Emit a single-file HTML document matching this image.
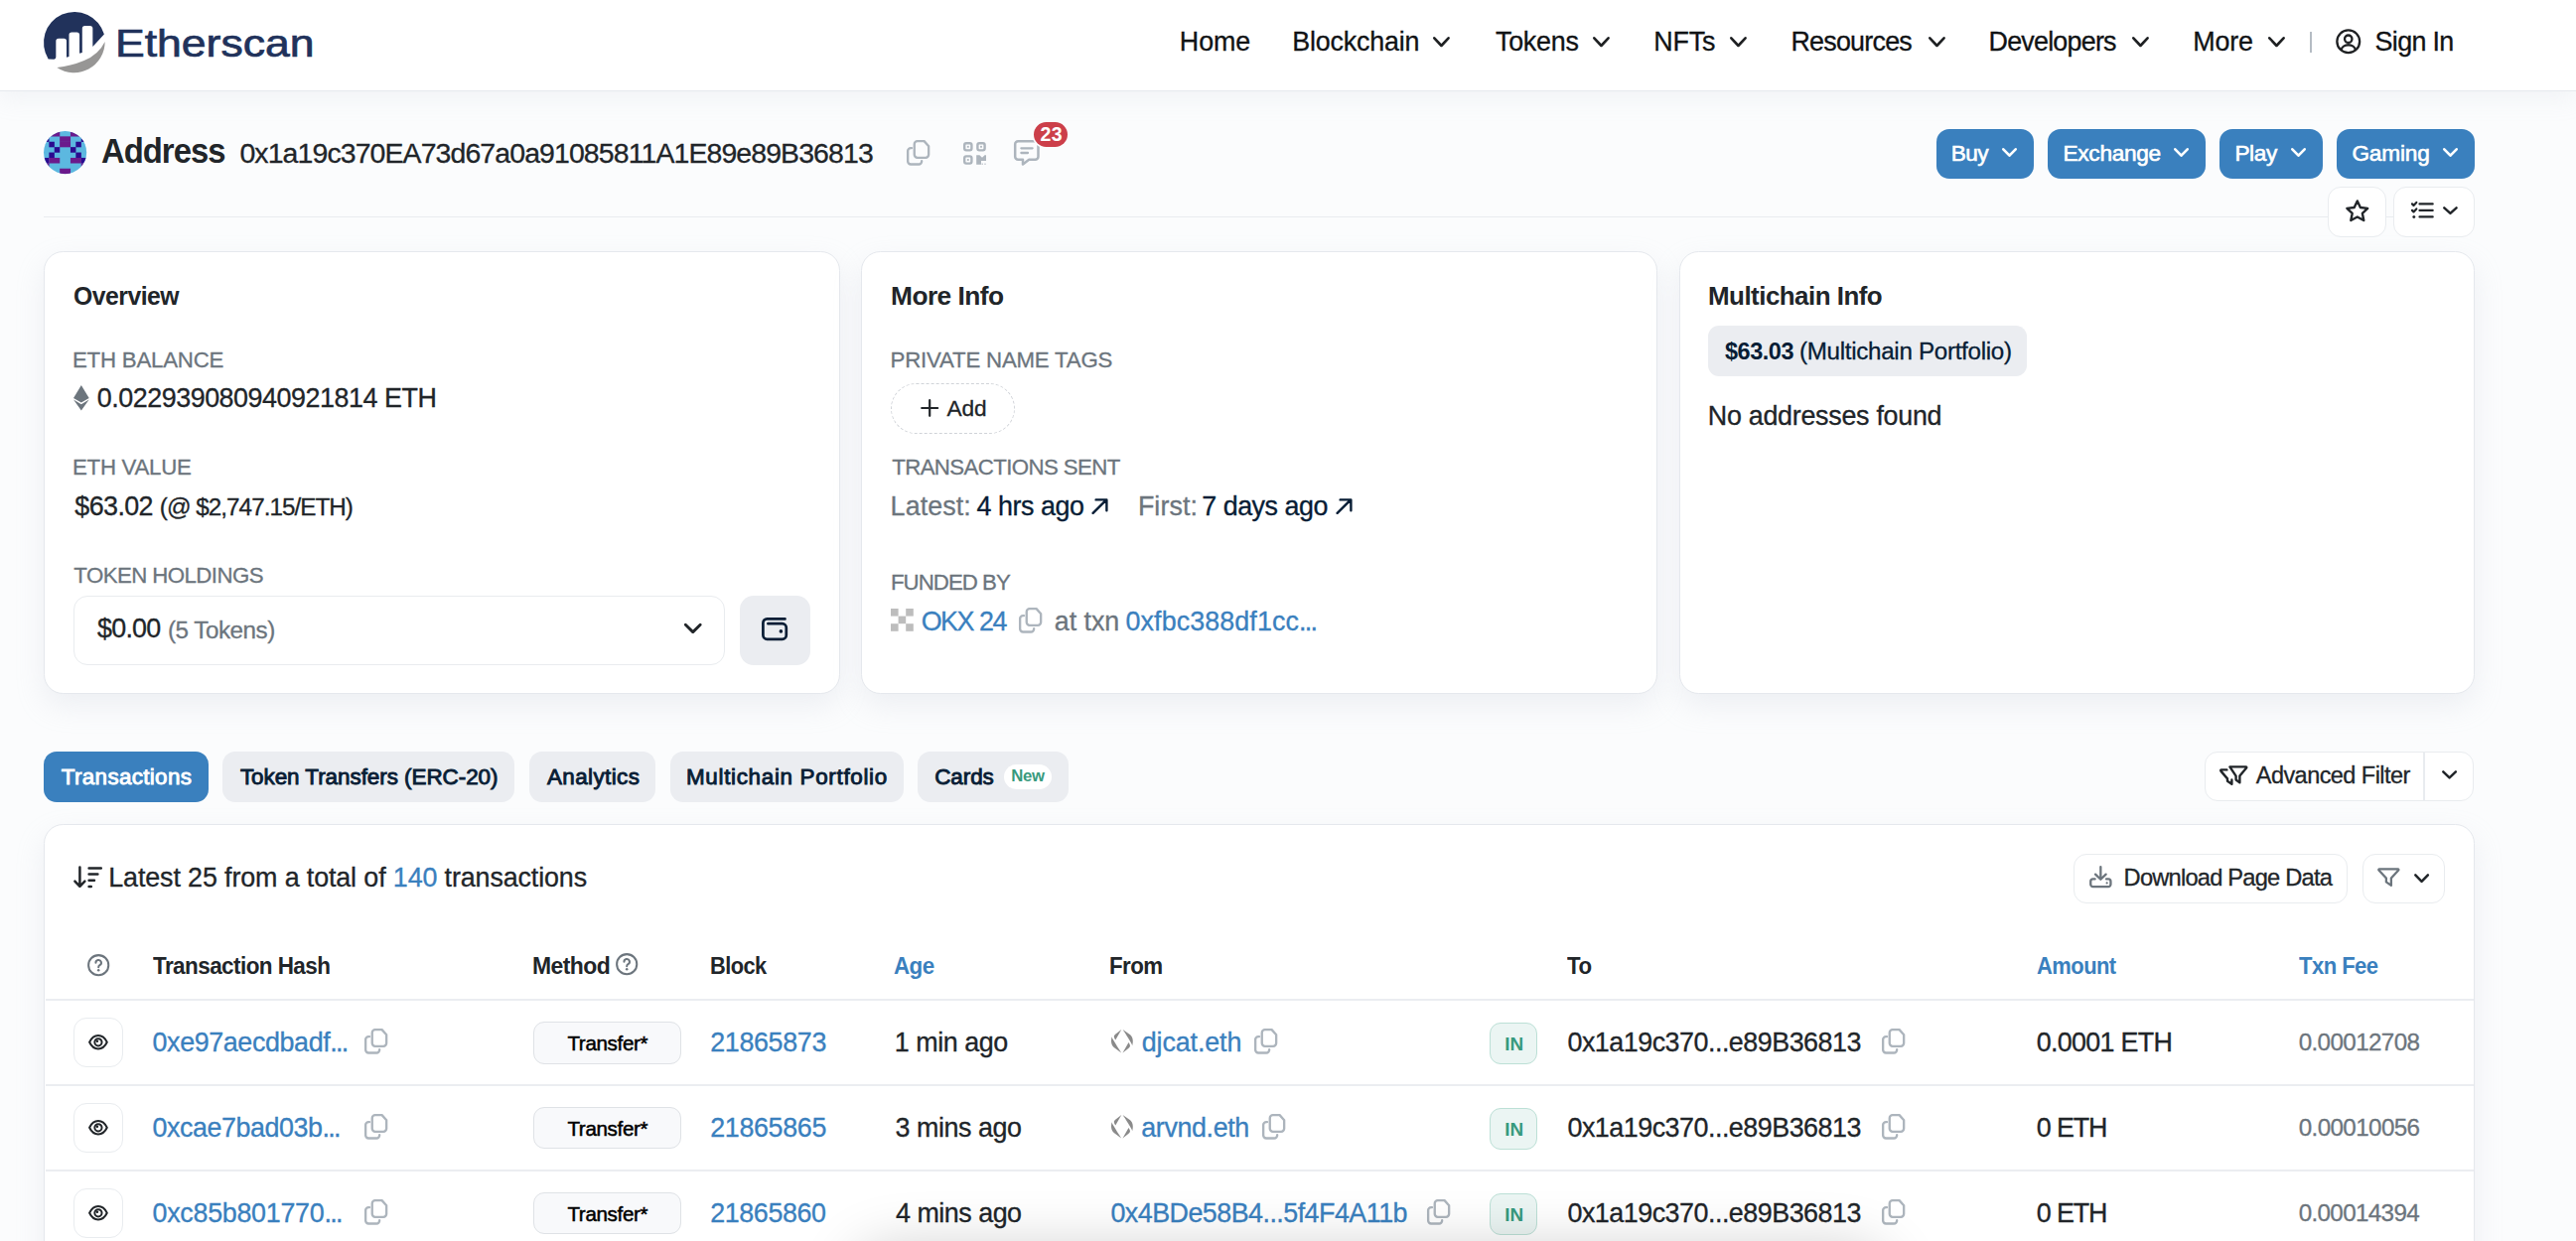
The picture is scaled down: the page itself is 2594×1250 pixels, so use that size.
<!DOCTYPE html>
<html lang="en">
<head>
<meta charset="utf-8">
<title>Address 0x1a19c370EA73d67a0a91085811A1E89e89B36813 | Etherscan</title>
<style>
*{box-sizing:border-box;margin:0;padding:0}
html,body{width:2594px;height:1250px;overflow:hidden}
body{background:#fbfcfd;font-family:"Liberation Sans",sans-serif;color:#212529;position:relative}
.t{position:absolute;white-space:nowrap;display:block;-webkit-text-stroke:0.3px currentColor;margin:0}
.t a{text-decoration:none}
.abs{position:absolute}
header{position:absolute;left:0;top:0;width:2594px;height:91.6px;background:#fff;border-bottom:1.2px solid #e6e9ee;box-shadow:0 8px 22px rgba(189,197,209,.15)}
.hr{position:absolute;left:44px;top:217.5px;width:2448px;height:1.5px;background:#e9ecef}
.card{position:absolute;background:#fff;border:1.4px solid #e5e8ed;border-radius:19.5px;box-shadow:0 12px 28px rgba(189,197,209,.22)}
.btnp{position:absolute;background:#3a80be;border-radius:13px}
.btnw{position:absolute;background:#fff;border:1.5px solid #e9ecef;border-radius:13px}
.tab{position:absolute;top:757px;height:51px;border-radius:13px;background:#ebedf1}
.tab.on{background:#3a80be}
.line{position:absolute;left:46px;width:2445px;height:1.8px;background:#ebedf1}
svg{position:absolute;overflow:visible}
.s{fill:none;stroke-linecap:round;stroke-linejoin:round}
</style>
</head>
<body>
<header>
<svg style="left:0;top:0" width="130" height="90" viewBox="0 0 130 90"><g transform="translate(30,0) scale(0.12422)">
<path fill="#21325b" d="M150 478 A250 250 0 1 1 603 278 L510 378 L510 232 A22 22 0 0 0 488 210 L447 210 A22 22 0 0 0 425 232 L425 426 L403 433 L403 284 A22 22 0 0 0 381 262 L340 262 A22 22 0 0 0 318 284 L318 458 L298 464 L298 334 A22 22 0 0 0 276 312 L234 312 A22 22 0 0 0 212 334 L212 462 Q212 478 196 480 Z"/>
<path fill="#979695" d="M220 547 A250 250 0 0 0 609 338 Q560 440 440 492 Q330 538 220 547 Z"/>
</g></svg>
<span class="t" style="left:115.92px;top:18.11px;font-size:38.93px;line-height:51px;letter-spacing:0.000px;font-weight:normal;color:#21325b;-webkit-text-stroke:0.7px #21325b;transform:scaleX(1.1442);transform-origin:0 0;">Etherscan</span>
<nav>
<a class="t" style="left:1187.80px;top:24.79px;font-size:26.88px;line-height:35px;letter-spacing:-0.073px;font-weight:normal;color:#111315;">Home</a>
<a class="t" style="left:1301.30px;top:24.79px;font-size:26.88px;line-height:35px;letter-spacing:-0.188px;font-weight:normal;color:#111315;">Blockchain</a>
<a class="t" style="left:1505.98px;top:24.79px;font-size:26.88px;line-height:35px;letter-spacing:-0.243px;font-weight:normal;color:#111315;">Tokens</a>
<a class="t" style="left:1665.30px;top:24.79px;font-size:26.88px;line-height:35px;letter-spacing:-0.225px;font-weight:normal;color:#111315;">NFTs</a>
<a class="t" style="left:1803.40px;top:24.79px;font-size:26.88px;line-height:35px;letter-spacing:-0.756px;font-weight:normal;color:#111315;">Resources</a>
<a class="t" style="left:2002.50px;top:24.79px;font-size:26.88px;line-height:35px;letter-spacing:-0.770px;font-weight:normal;color:#111315;">Developers</a>
<a class="t" style="left:2208.20px;top:24.79px;font-size:26.88px;line-height:35px;letter-spacing:-0.152px;font-weight:normal;color:#111315;">More</a>
<a class="t" style="left:2391.56px;top:24.79px;font-size:26.88px;line-height:35px;letter-spacing:-0.657px;font-weight:normal;color:#111315;">Sign In</a>
<svg style="left:1443.3px;top:36.5px" width="16.9" height="10.3" viewBox="0 0 16.9 10.3"><path class="s" stroke="#1e2022" stroke-width="2.6" d="M1.3 1.3 L8.45 9.00 L15.60 1.3"/></svg>
<svg style="left:1604.3px;top:36.5px" width="16.9" height="10.3" viewBox="0 0 16.9 10.3"><path class="s" stroke="#1e2022" stroke-width="2.6" d="M1.3 1.3 L8.45 9.00 L15.60 1.3"/></svg>
<svg style="left:1741.9px;top:36.5px" width="16.9" height="10.3" viewBox="0 0 16.9 10.3"><path class="s" stroke="#1e2022" stroke-width="2.6" d="M1.3 1.3 L8.45 9.00 L15.60 1.3"/></svg>
<svg style="left:1941.6px;top:36.5px" width="16.9" height="10.3" viewBox="0 0 16.9 10.3"><path class="s" stroke="#1e2022" stroke-width="2.6" d="M1.3 1.3 L8.45 9.00 L15.60 1.3"/></svg>
<svg style="left:2147.3px;top:36.5px" width="16.9" height="10.3" viewBox="0 0 16.9 10.3"><path class="s" stroke="#1e2022" stroke-width="2.6" d="M1.3 1.3 L8.45 9.00 L15.60 1.3"/></svg>
<svg style="left:2284.0px;top:36.5px" width="16.9" height="10.3" viewBox="0 0 16.9 10.3"><path class="s" stroke="#1e2022" stroke-width="2.6" d="M1.3 1.3 L8.45 9.00 L15.60 1.3"/></svg>
<div class="abs" style="left:2325.6px;top:32.3px;width:2.2px;height:21.2px;background:#b5bcc4"></div>
<svg style="left:2352.0px;top:28.5px" width="25.5" height="25.5" viewBox="0 0 25.5 25.5"><circle class="s" stroke="#1e2022" stroke-width="2.3" cx="12.75" cy="12.75" r="11.4"/><circle class="s" stroke="#1e2022" stroke-width="2.3" cx="12.75" cy="10.2" r="3.7"/><path class="s" stroke="#1e2022" stroke-width="2.3" d="M5.6 21.2 a7.2 5.6 0 0 1 14.3 0"/></svg>
</nav>
</header>
<main>
<section id="title">
<svg style="left:43.8px;top:131.8px" width="43.2" height="43.2" viewBox="0 0 8 8"><defs><clipPath id="bc"><circle cx="4" cy="4" r="4"/></clipPath></defs><circle cx="4" cy="4" r="4" fill="#5cb8e0"/><g clip-path="url(#bc)"><rect x="-0.01" y="-0.01" width="3.02" height="1.03" fill="#6b1a8c"/><rect x="4.99" y="-0.01" width="3.02" height="1.03" fill="#6b1a8c"/><rect x="-0.01" y="0.99" width="1.02" height="1.03" fill="#2a0a8f"/><rect x="2.99" y="0.99" width="2.02" height="1.03" fill="#6b1a8c"/><rect x="6.99" y="0.99" width="1.02" height="1.03" fill="#2a0a8f"/><rect x="0.99" y="1.99" width="1.02" height="1.03" fill="#2a0a8f"/><rect x="2.99" y="1.99" width="2.02" height="1.03" fill="#6b1a8c"/><rect x="5.99" y="1.99" width="1.02" height="1.03" fill="#2a0a8f"/><rect x="1.99" y="2.99" width="1.02" height="1.03" fill="#2a0a8f"/><rect x="4.99" y="2.99" width="1.02" height="1.03" fill="#2a0a8f"/><rect x="0.99" y="3.99" width="1.02" height="1.03" fill="#2a0a8f"/><rect x="5.99" y="3.99" width="1.02" height="1.03" fill="#2a0a8f"/><rect x="-0.01" y="4.99" width="1.02" height="1.03" fill="#2a0a8f"/><rect x="0.99" y="4.99" width="2.02" height="1.03" fill="#6b1a8c"/><rect x="4.99" y="4.99" width="2.02" height="1.03" fill="#6b1a8c"/><rect x="6.99" y="4.99" width="1.02" height="1.03" fill="#2a0a8f"/><rect x="-0.01" y="5.99" width="1.02" height="1.03" fill="#6b1a8c"/><rect x="6.99" y="5.99" width="1.02" height="1.03" fill="#6b1a8c"/><rect x="2.99" y="6.99" width="2.02" height="1.03" fill="#6b1a8c"/></g></svg>
<h1 class="t" style="left:101.79px;top:128.67px;font-size:35.02px;line-height:46px;letter-spacing:-1.051px;font-weight:bold;color:#212529;-webkit-text-stroke:0;transform:scaleX(0.9373);transform-origin:0 0;">Address</h1>
<span class="t" style="left:241.41px;top:135.85px;font-size:28.43px;line-height:37px;letter-spacing:-0.879px;font-weight:normal;color:#212529;">0x1a19c370EA73d67a0a91085811A1E89e89B36813</span>
<svg style="left:913.1px;top:141.4px" width="23.3" height="25.6" viewBox="0 0 23.3 25.6"><path class="s" stroke="#adb5bd" stroke-width="2.35" d="M10.75 17.85 H19.15 a3 3 0 0 0 3 -3 V6.2 L17.6 1.15 H10.75 a3 3 0 0 0 -3 3 V14.85 a3 3 0 0 0 3 3z"/><path class="s" stroke="#adb5bd" stroke-width="2.35" d="M5 8.1 H4.15 a3 3 0 0 0 -3 3 V21.5 a3 3 0 0 0 3 3 H12.15 a3 3 0 0 0 3 -3 V21.2"/></svg>
<svg style="left:969.8px;top:143.0px" width="23.0" height="22.8" viewBox="0 0 23 22.8"><rect class="s" stroke="#adb5bd" stroke-width="2.4" x="1.2" y="1.2" width="7.2" height="7.2" rx="1.8"/><rect fill="#adb5bd" x="3.9" y="3.9" width="1.8" height="1.8"/><rect class="s" stroke="#adb5bd" stroke-width="2.4" x="14.399999999999999" y="1.2" width="7.2" height="7.2" rx="1.8"/><rect fill="#adb5bd" x="17.099999999999998" y="3.9" width="1.8" height="1.8"/><rect class="s" stroke="#adb5bd" stroke-width="2.4" x="1.2" y="14.399999999999999" width="7.2" height="7.2" rx="1.8"/><rect fill="#adb5bd" x="3.9" y="17.099999999999998" width="1.8" height="1.8"/><path fill="#adb5bd" d="M13.2 13.2 h3.2 l2.6 2.6 l2.6 -2.6 h1.4 v5.8 h-5 v3.8 h-4.8z"/><rect fill="#adb5bd" x="18.6" y="21.6" width="1.2" height="1.2"/><rect fill="#adb5bd" x="21.4" y="21.6" width="1.2" height="1.2"/></svg>
<svg style="left:1021.2px;top:140.8px" width="25.7" height="25.1" viewBox="0 0 25.7 25.1"><path class="s" stroke="#adb5bd" stroke-width="2.5" d="M4.2 1.3 h17.3 a3 3 0 0 1 3 3 v12.5 a3 3 0 0 1 -3 3 h-6.3 l-6.2 4.6 v-4.6 h-4.8 a3 3 0 0 1 -3 -3 v-12.5 a3 3 0 0 1 3 -3z"/><path class="s" stroke="#adb5bd" stroke-width="2.3" d="M7.4 8.3 h11.2 M7.4 13 h6.6"/></svg>
<div class="abs" style="left:1040.6px;top:123.1px;width:34.8px;height:25.4px;background:#cc3f4a;border-radius:13px;box-shadow:0 0 0 1.6px #fbfcfd"></div>
<span class="t" style="left:1047.50px;top:123.32px;font-size:19.57px;line-height:25px;letter-spacing:0.417px;font-weight:bold;color:#fff;-webkit-text-stroke:0;">23</span>
<div class="btnp" style="left:1949.9px;top:130.0px;width:98.1px;height:50.0px;"></div>
<span class="t" style="left:1964.70px;top:140.05px;font-size:22.66px;line-height:29px;letter-spacing:-0.608px;font-weight:normal;color:#fff;-webkit-text-stroke:0.6px #fff;">Buy</span>
<svg style="left:2016.3px;top:149.0px" width="15.0" height="9.0" viewBox="0 0 15.0 9.0"><path class="s" stroke="#fff" stroke-width="2.6" d="M1.3 1.3 L7.50 7.70 L13.70 1.3"/></svg>
<div class="btnp" style="left:2061.9px;top:130.0px;width:159.2px;height:50.0px;"></div>
<span class="t" style="left:2077.50px;top:140.05px;font-size:22.66px;line-height:29px;letter-spacing:-0.297px;font-weight:normal;color:#fff;-webkit-text-stroke:0.6px #fff;">Exchange</span>
<svg style="left:2189.0px;top:149.0px" width="15.0" height="9.0" viewBox="0 0 15.0 9.0"><path class="s" stroke="#fff" stroke-width="2.6" d="M1.3 1.3 L7.50 7.70 L13.70 1.3"/></svg>
<div class="btnp" style="left:2234.9px;top:130.0px;width:104.1px;height:50.0px;"></div>
<span class="t" style="left:2250.40px;top:140.05px;font-size:22.66px;line-height:29px;letter-spacing:-0.417px;font-weight:normal;color:#fff;-webkit-text-stroke:0.6px #fff;">Play</span>
<svg style="left:2307.0px;top:149.0px" width="15.0" height="9.0" viewBox="0 0 15.0 9.0"><path class="s" stroke="#fff" stroke-width="2.6" d="M1.3 1.3 L7.50 7.70 L13.70 1.3"/></svg>
<div class="btnp" style="left:2352.9px;top:130.0px;width:139.1px;height:50.0px;"></div>
<span class="t" style="left:2368.40px;top:140.05px;font-size:22.66px;line-height:29px;letter-spacing:-0.168px;font-weight:normal;color:#fff;-webkit-text-stroke:0.6px #fff;">Gaming</span>
<svg style="left:2460.4px;top:149.0px" width="15.0" height="9.0" viewBox="0 0 15.0 9.0"><path class="s" stroke="#fff" stroke-width="2.6" d="M1.3 1.3 L7.50 7.70 L13.70 1.3"/></svg>
<div class="hr"></div>
<div class="btnw" style="left:2344.2px;top:188.1px;width:58.4px;height:50.5px;"></div>
<svg style="left:2361.6px;top:201.4px" width="23.6" height="22.3" viewBox="0 0 23.6 22.3"><path class="s" stroke="#212529" stroke-width="2.4" d="M11.8 1.4 L14.9 8 L22.2 8.9 L16.9 13.9 L18.3 21 L11.8 17.5 L5.3 21 L6.7 13.9 L1.4 8.9 L8.7 8 Z"/></svg>
<div class="btnw" style="left:2410.4px;top:188.1px;width:81.4px;height:50.5px;"></div>
<svg style="left:2428.0px;top:203.0px" width="23.0" height="17.6" viewBox="0 0 23 17.6"><path class="s" stroke="#212529" stroke-width="2.2" d="M8.5 2.4 h13.2 M8.5 8.9 h13.2 M8.5 15.4 h13.2 M1 2.4 l1.5 1.5 l2.8 -3 M1 8.9 l1.5 1.5 l2.8 -3"/><circle cx="2.8" cy="15.4" r="1.5" fill="#212529"/></svg>
<svg style="left:2460.4px;top:208.0px" width="14.9" height="8.2" viewBox="0 0 14.9 8.2"><path class="s" stroke="#212529" stroke-width="2.5" d="M1.3 1.3 L7.45 6.90 L13.60 1.3"/></svg>
</section>
<section id="overview">
<div class="card" style="left:44.3px;top:253.2px;width:801.6px;height:445.7px;"></div>
<h3 class="t" style="left:74.03px;top:282.18px;font-size:25.75px;line-height:33px;letter-spacing:-0.515px;font-weight:bold;color:#212529;-webkit-text-stroke:0;transform:scaleX(0.9610);transform-origin:0 0;">Overview</h3>
<h4 class="t" style="left:73.00px;top:348.39px;font-size:22.25px;line-height:29px;letter-spacing:-0.219px;font-weight:normal;color:#6c757d;">ETH BALANCE</h4>
<svg style="left:74.3px;top:388.4px" width="15.7" height="25.5" viewBox="0 0 15.7 25.5"><path fill="#6c757d" d="M7.85 0 L15.7 13 L7.85 17.6 L0 13 Z"/><path fill="#6c757d" d="M0 14.6 L7.85 19.2 L15.7 14.6 L7.85 25.5 Z"/></svg>
<span class="t" style="left:97.66px;top:384.49px;font-size:26.88px;line-height:35px;letter-spacing:-0.453px;font-weight:normal;color:#212529;">0.022939080940921814 ETH</span>
<h4 class="t" style="left:73.00px;top:456.29px;font-size:22.25px;line-height:29px;letter-spacing:-0.267px;font-weight:normal;color:#6c757d;">ETH VALUE</h4>
<span class="t" style="left:75.30px;top:492.54px;font-size:26.88px;line-height:35px;letter-spacing:-0.586px;font-weight:normal;color:#212529;">$63.02</span>
<span class="t" style="left:160.80px;top:495.46px;font-size:24.21px;line-height:31px;letter-spacing:-0.948px;font-weight:normal;color:#212529;">(@ $2,747.15/ETH)</span>
<h4 class="t" style="left:74.30px;top:565.49px;font-size:22.25px;line-height:29px;letter-spacing:-0.567px;font-weight:normal;color:#6c757d;">TOKEN HOLDINGS</h4>
<div class="abs" style="left:74.3px;top:600.2px;width:655.3px;height:69.4px;background:#fff;border:1.5px solid #e9ecef;border-radius:14px"></div>
<span class="t" style="left:98.00px;top:616.29px;font-size:26.88px;line-height:35px;letter-spacing:-0.750px;font-weight:normal;color:#212529;">$0.00</span>
<span class="t" style="left:169.00px;top:619.21px;font-size:24.21px;line-height:31px;letter-spacing:-0.482px;font-weight:normal;color:#6c757d;">(5 Tokens)</span>
<svg style="left:688.8px;top:628.3px" width="17.5" height="9.9" viewBox="0 0 17.5 9.9"><path class="s" stroke="#212529" stroke-width="2.9" d="M1.3 1.3 L8.75 8.60 L16.20 1.3"/></svg>
<div class="abs" style="left:745.0px;top:600.0px;width:71.0px;height:70.0px;background:#ebedf1;border-radius:14px"></div>
<svg style="left:767.0px;top:621.7px" width="26.2" height="23.2" viewBox="0 0 26.2 23.2"><path class="s" stroke="#081d35" stroke-width="2.7" d="M23.5 1.4 H5.4 a4 4 0 0 0 -4 4 v12.4 a4 4 0 0 0 4 4 h15.4 a4 4 0 0 0 4 -4 v-7.6 a4 4 0 0 0 -4 -4 H6.4"/><circle cx="19.4" cy="13.9" r="1.8" fill="#081d35"/></svg>
</section>
<section id="moreinfo">
<div class="card" style="left:867.4px;top:253.2px;width:801.7px;height:445.7px;"></div>
<h3 class="t" style="left:896.76px;top:282.18px;font-size:25.75px;line-height:33px;letter-spacing:-0.515px;font-weight:bold;color:#212529;-webkit-text-stroke:0;transform:scaleX(1.0211);transform-origin:0 0;">More Info</h3>
<h4 class="t" style="left:896.60px;top:348.39px;font-size:22.25px;line-height:29px;letter-spacing:-0.207px;font-weight:normal;color:#6c757d;">PRIVATE NAME TAGS</h4>
<div class="abs" style="left:897.0px;top:385.9px;width:125.0px;height:50.9px;border:1.5px dashed #d0d3d8;border-radius:26px"></div>
<svg style="left:927.3px;top:402.0px" width="18.4" height="18.0" viewBox="0 0 18.4 18"><path class="s" stroke="#212529" stroke-width="2.2" d="M9.2 1.2 V16.8 M1.2 9 H17.2"/></svg>
<span class="t" style="left:953.40px;top:396.85px;font-size:22.66px;line-height:29px;letter-spacing:-0.108px;font-weight:normal;color:#212529;">Add</span>
<h4 class="t" style="left:898.20px;top:456.29px;font-size:22.25px;line-height:29px;letter-spacing:-0.607px;font-weight:normal;color:#6c757d;">TRANSACTIONS SENT</h4>
<span class="t" style="left:896.60px;top:492.89px;font-size:26.88px;line-height:35px;letter-spacing:0.088px;font-weight:normal;color:#6c757d;">Latest:</span>
<a class="t" style="left:983.38px;top:492.89px;font-size:26.88px;line-height:35px;letter-spacing:-0.447px;font-weight:normal;color:#081d35;">4 hrs ago</a>
<svg style="left:1099.0px;top:501.6px" width="16.8" height="16.3" viewBox="0 0 16.8 16.3"><path class="s" stroke="#081d35" stroke-width="2.4" d="M1.6 14.8 L15.2 1.4 M4.6 1.4 H15.4 V12.2"/></svg>
<span class="t" style="left:1145.90px;top:492.89px;font-size:26.88px;line-height:35px;letter-spacing:0.061px;font-weight:normal;color:#6c757d;">First:</span>
<a class="t" style="left:1210.24px;top:492.89px;font-size:26.88px;line-height:35px;letter-spacing:-0.486px;font-weight:normal;color:#081d35;">7 days ago</a>
<svg style="left:1345.0px;top:501.6px" width="16.8" height="16.3" viewBox="0 0 16.8 16.3"><path class="s" stroke="#081d35" stroke-width="2.4" d="M1.6 14.8 L15.2 1.4 M4.6 1.4 H15.4 V12.2"/></svg>
<h4 class="t" style="left:896.90px;top:572.39px;font-size:22.25px;line-height:29px;letter-spacing:-0.951px;font-weight:normal;color:#6c757d;">FUNDED BY</h4>
<svg style="left:897.2px;top:613.2px" width="22.8" height="22.8" viewBox="0 0 3 3"><rect x="0" y="0" width="1" height="1" fill="#bdbdbd"/><rect x="2" y="0" width="1" height="1" fill="#bdbdbd"/><rect x="1" y="1" width="1" height="1" fill="#bdbdbd"/><rect x="0" y="2" width="1" height="1" fill="#bdbdbd"/><rect x="2" y="2" width="1" height="1" fill="#bdbdbd"/></svg>
<a class="t" style="left:927.64px;top:608.99px;font-size:26.88px;line-height:35px;letter-spacing:-1.482px;font-weight:normal;color:#3a80be;">OKX 24</a>
<svg style="left:1025.9px;top:612.4px" width="23.3" height="25.6" viewBox="0 0 23.3 25.6"><path class="s" stroke="#adb5bd" stroke-width="2.35" d="M10.75 17.85 H19.15 a3 3 0 0 0 3 -3 V6.2 L17.6 1.15 H10.75 a3 3 0 0 0 -3 3 V14.85 a3 3 0 0 0 3 3z"/><path class="s" stroke="#adb5bd" stroke-width="2.35" d="M5 8.1 H4.15 a3 3 0 0 0 -3 3 V21.5 a3 3 0 0 0 3 3 H12.15 a3 3 0 0 0 3 -3 V21.2"/></svg>
<span class="t" style="left:1061.76px;top:608.99px;font-size:26.88px;line-height:35px;letter-spacing:-0.040px;font-weight:normal;color:#6c757d;">at txn</span>
<a class="t" style="left:1133.56px;top:608.99px;font-size:26.88px;line-height:35px;letter-spacing:0.085px;font-weight:normal;color:#3a80be;">0xfbc388df1cc<i style="font-style:normal;letter-spacing:-1.7px">...</i></a>
</section>
<section id="multichain">
<div class="card" style="left:1690.6px;top:253.2px;width:801.7px;height:445.7px;"></div>
<h3 class="t" style="left:1720.28px;top:282.18px;font-size:25.75px;line-height:33px;letter-spacing:-0.515px;font-weight:bold;color:#212529;-webkit-text-stroke:0;transform:scaleX(1.0070);transform-origin:0 0;">Multichain Info</h3>
<div class="abs" style="left:1720.0px;top:328.2px;width:321.0px;height:50.6px;background:#ebedf1;border-radius:11px"></div>
<span class="t" style="left:1736.81px;top:337.61px;font-size:24.21px;line-height:31px;letter-spacing:-0.484px;font-weight:bold;color:#081d35;-webkit-text-stroke:0;transform:scaleX(0.9709);transform-origin:0 0;">$63.03</span>
<span class="t" style="left:1811.90px;top:337.61px;font-size:24.21px;line-height:31px;letter-spacing:-0.307px;font-weight:normal;color:#081d35;">(Multichain Portfolio)</span>
<span class="t" style="left:1719.80px;top:401.69px;font-size:26.88px;line-height:35px;letter-spacing:-0.282px;font-weight:normal;color:#212529;">No addresses found</span>
</section>
<section id="tabs">
<div class="tab on" style="left:44px;width:166.0px"></div>
<a class="t" style="left:61.80px;top:768.32px;font-size:22.45px;line-height:29px;letter-spacing:0.320px;font-weight:normal;color:#fff;-webkit-text-stroke:0.9px currentColor;">Transactions</a>
<div class="tab" style="left:224.1px;width:293.9px"></div>
<a class="t" style="left:241.90px;top:768.32px;font-size:22.45px;line-height:29px;letter-spacing:-0.044px;font-weight:normal;color:#081d35;-webkit-text-stroke:0.9px currentColor;">Token Transfers (ERC-20)</a>
<div class="tab" style="left:533.1px;width:127.0px"></div>
<a class="t" style="left:550.90px;top:768.32px;font-size:22.45px;line-height:29px;letter-spacing:0.398px;font-weight:normal;color:#081d35;-webkit-text-stroke:0.9px currentColor;">Analytics</a>
<div class="tab" style="left:674.9px;width:235.1px"></div>
<a class="t" style="left:691.00px;top:768.32px;font-size:22.45px;line-height:29px;letter-spacing:0.668px;font-weight:normal;color:#081d35;-webkit-text-stroke:0.9px currentColor;">Multichain Portfolio</a>
<div class="tab" style="left:924.2px;width:152.0px"></div>
<a class="t" style="left:941.20px;top:768.32px;font-size:22.45px;line-height:29px;letter-spacing:-0.067px;font-weight:normal;color:#081d35;-webkit-text-stroke:0.9px currentColor;">Cards</a>
<div class="abs" style="left:1010.7px;top:769.9px;width:48.2px;height:25.2px;background:#fff;border-radius:13px"></div>
<span class="t" style="left:1018.30px;top:771.22px;font-size:16.69px;line-height:22px;letter-spacing:-0.265px;font-weight:bold;color:#389a7e;-webkit-text-stroke:0;">New</span>
<div class="btnw" style="left:2220.3px;top:757.2px;width:271.2px;height:49.5px;"></div>
<div class="abs" style="left:2440.0px;top:758.0px;width:1.5px;height:48.0px;background:#e9ecef"></div>
<svg style="left:2235.4px;top:770.6px" width="28.4" height="20.0" viewBox="0 0 28.4 20"><path class="s" stroke="#212529" stroke-width="2.4" d="M10.4 1.4 H26.6 a0.7 0.7 0 0 1 0.5 1.2 L20.4 10.6 V17.2 L16.6 14.6 V10.6 Z"/><path class="s" stroke="#212529" stroke-width="2.4" d="M7.4 4.4 H1.9 a0.7 0.7 0 0 0 -0.5 1.2 L8 13.4 V15.8 L12.4 18.8 V14.4"/></svg>
<span class="t" style="left:2271.80px;top:765.76px;font-size:23.48px;line-height:31px;letter-spacing:-0.538px;font-weight:normal;color:#212529;">Advanced Filter</span>
<svg style="left:2458.5px;top:776.3px" width="15.2" height="8.7" viewBox="0 0 15.2 8.7"><path class="s" stroke="#212529" stroke-width="2.5" d="M1.3 1.3 L7.60 7.40 L13.90 1.3"/></svg>
</section>
<section id="transactions">
<div class="card" style="left:44.3px;top:829.9px;width:2448.0px;height:470.1px;"></div>
<svg style="left:73.8px;top:872.2px" width="29.2" height="22.4" viewBox="0 0 29.2 22.4"><path class="s" stroke="#212529" stroke-width="2.5" d="M6.4 1.4 V20.6 M1.4 15.6 L6.4 20.8 L11.4 15.6 M15.6 2.4 H27.8 M15.6 8.6 H24.4 M15.6 14.8 H21 M15.6 21 H17.8"/></svg>
<span class="t" style="left:109.30px;top:867.09px;font-size:26.88px;line-height:35px;letter-spacing:-0.127px;font-weight:normal;color:#212529;">Latest 25 from a total of <a style="color:#3a80be">140</a> transactions</span>
<div class="btnw" style="left:2088.2px;top:860.0px;width:275.4px;height:49.5px;"></div>
<svg style="left:2103.8px;top:872.3px" width="22.7" height="22.5" viewBox="0 0 22.6 22.5"><path class="s" stroke="#6c757d" stroke-width="2.3" d="M11.3 1.2 V13.6 M6 8.6 L11.3 13.8 L16.6 8.6 M5.6 13.4 H3.6 a2.4 2.4 0 0 0 -2.4 2.4 v3 a2.4 2.4 0 0 0 2.4 2.4 h15.4 a2.4 2.4 0 0 0 2.4 -2.4 v-3 a2.4 2.4 0 0 0 -2.4 -2.4 h-2"/><circle cx="17.6" cy="17.4" r="1.1" fill="#6c757d"/></svg>
<span class="t" style="left:2138.60px;top:868.89px;font-size:23.69px;line-height:31px;letter-spacing:-0.800px;font-weight:normal;color:#212529;">Download Page Data</span>
<div class="btnw" style="left:2379.3px;top:860.0px;width:82.5px;height:49.5px;"></div>
<svg style="left:2393.9px;top:873.8px" width="22.7" height="19.4" viewBox="0 0 22.7 19.4"><path class="s" stroke="#6c757d" stroke-width="2.3" d="M2 1.3 H20.7 a0.7 0.7 0 0 1 0.55 1.15 L13.9 10.6 V17.9 L8.9 14.4 V10.6 L1.45 2.45 A0.7 0.7 0 0 1 2 1.3 Z"/></svg>
<svg style="left:2430.5px;top:879.6px" width="15.2" height="9.2" viewBox="0 0 15.2 9.2"><path class="s" stroke="#212529" stroke-width="2.5" d="M1.3 1.3 L7.60 7.90 L13.90 1.3"/></svg>
<svg style="left:87.9px;top:960.5px" width="22.4" height="22.4" viewBox="0 0 22 22"><circle class="s" stroke="#6c757d" stroke-width="2" cx="11" cy="11" r="9.9"/><path class="s" stroke="#6c757d" stroke-width="2" d="M8.3 8.6 a2.7 2.7 0 1 1 3.9 2.4 c-0.9 0.5 -1.2 0.9 -1.2 1.9"/><circle cx="11" cy="15.9" r="1.25" fill="#6c757d"/></svg>
<svg style="left:620.3px;top:960.2px" width="22.4" height="22.4" viewBox="0 0 22 22"><circle class="s" stroke="#6c757d" stroke-width="2" cx="11" cy="11" r="9.9"/><path class="s" stroke="#6c757d" stroke-width="2" d="M8.3 8.6 a2.7 2.7 0 1 1 3.9 2.4 c-0.9 0.5 -1.2 0.9 -1.2 1.9"/><circle cx="11" cy="15.9" r="1.25" fill="#6c757d"/></svg>
<span class="t" style="left:153.71px;top:958.33px;font-size:23.28px;line-height:30px;letter-spacing:-0.582px;font-weight:bold;color:#212529;-webkit-text-stroke:0;transform:scaleX(0.9663);transform-origin:0 0;">Transaction Hash</span>
<span class="t" style="left:536.42px;top:958.33px;font-size:23.28px;line-height:30px;letter-spacing:-0.582px;font-weight:bold;color:#212529;-webkit-text-stroke:0;transform:scaleX(0.9868);transform-origin:0 0;">Method</span>
<span class="t" style="left:714.59px;top:958.33px;font-size:23.28px;line-height:30px;letter-spacing:-0.582px;font-weight:bold;color:#212529;-webkit-text-stroke:0;transform:scaleX(0.9377);transform-origin:0 0;">Block</span>
<span class="t" style="left:899.92px;top:958.33px;font-size:23.28px;line-height:30px;letter-spacing:-0.582px;font-weight:bold;color:#3a80be;-webkit-text-stroke:0;transform:scaleX(0.9624);transform-origin:0 0;">Age</span>
<span class="t" style="left:1116.56px;top:958.33px;font-size:23.28px;line-height:30px;letter-spacing:-0.582px;font-weight:bold;color:#212529;-webkit-text-stroke:0;transform:scaleX(0.9599);transform-origin:0 0;">From</span>
<span class="t" style="left:1577.51px;top:958.33px;font-size:23.28px;line-height:30px;letter-spacing:-0.582px;font-weight:bold;color:#212529;-webkit-text-stroke:0;transform:scaleX(0.9558);transform-origin:0 0;">To</span>
<span class="t" style="left:2050.93px;top:958.33px;font-size:23.28px;line-height:30px;letter-spacing:-0.582px;font-weight:bold;color:#3a80be;-webkit-text-stroke:0;transform:scaleX(0.9436);transform-origin:0 0;">Amount</span>
<span class="t" style="left:2315.01px;top:958.33px;font-size:23.28px;line-height:30px;letter-spacing:-0.582px;font-weight:bold;color:#3a80be;-webkit-text-stroke:0;transform:scaleX(0.9483);transform-origin:0 0;">Txn Fee</span>
<div class="line" style="top:1006.35px"></div>
<div class="btnw" style="left:74.4px;top:1025.4px;width:49.2px;height:49.9px;"></div>
<svg style="left:89.3px;top:1041.8px" width="19.9" height="15.6" viewBox="0 0 19.9 15.6"><path class="s" stroke="#212529" stroke-width="2" d="M1.1 7.8 C3.2 3.4 6.3 1.1 9.95 1.1 C13.6 1.1 16.7 3.4 18.8 7.8 C16.7 12.2 13.6 14.5 9.95 14.5 C6.3 14.5 3.2 12.2 1.1 7.8 Z"/><circle class="s" stroke="#212529" stroke-width="2" cx="9.95" cy="7.8" r="3.6"/><circle cx="8.9" cy="6.8" r="1.3" fill="#212529"/></svg>
<a class="t" style="left:153.56px;top:1033.09px;font-size:26.88px;line-height:35px;letter-spacing:-0.392px;font-weight:normal;color:#3a80be;">0xe97aecdbadf<i style="font-style:normal;letter-spacing:-1.7px">...</i></a>
<svg style="left:366.8px;top:1036.3px" width="23.3" height="25.6" viewBox="0 0 23.3 25.6"><path class="s" stroke="#adb5bd" stroke-width="2.35" d="M10.75 17.85 H19.15 a3 3 0 0 0 3 -3 V6.2 L17.6 1.15 H10.75 a3 3 0 0 0 -3 3 V14.85 a3 3 0 0 0 3 3z"/><path class="s" stroke="#adb5bd" stroke-width="2.35" d="M5 8.1 H4.15 a3 3 0 0 0 -3 3 V21.5 a3 3 0 0 0 3 3 H12.15 a3 3 0 0 0 3 -3 V21.2"/></svg>
<div class="abs" style="left:537.1px;top:1029.0px;width:148.8px;height:42.6px;background:#f8f9fb;border:1.5px solid #dfe2e6;border-radius:11px"></div>
<span class="t" style="left:571.40px;top:1037.26px;font-size:20.60px;line-height:27px;letter-spacing:-0.342px;font-weight:normal;color:#000;-webkit-text-stroke:0.5px #000;">Transfer*</span>
<a class="t" style="left:715.24px;top:1033.09px;font-size:26.88px;line-height:35px;letter-spacing:-0.351px;font-weight:normal;color:#3a80be;">21865873</a>
<span class="t" style="left:900.72px;top:1033.09px;font-size:26.88px;line-height:35px;letter-spacing:-0.436px;font-weight:normal;color:#212529;">1 min ago</span>
<svg style="left:1119.2px;top:1036.8px" width="21.8" height="23.4" viewBox="0 0 21.8 23.4"><path fill="#8a8a8a" d="M2.9 6.3 C3.4 5.3 4.2 4.7 4.2 4.7 L10.3 0 L4.3 10.4 C4.3 10.4 3.7 9.5 3.4 9 C3.1 8.4 2.6 7.2 2.9 6.3 Z M0.2 13.6 C0.5 15.4 1.4 17 2.7 18.1 L10.2 23.4 C10.2 23.4 5.5 16.4 1.5 9.5 C1.1 8.8 0.8 8 0.7 7.2 C0.1 8.4 -0.2 11.6 0.2 13.6 Z M18.9 17.1 C18.4 18.1 17.6 18.7 17.6 18.7 L11.5 23.4 L17.5 13 C17.5 13 18.1 13.9 18.4 14.4 C18.7 15 19.2 16.2 18.9 17.1 Z M21.6 9.8 C21.3 8 20.4 6.4 19.1 5.3 L11.6 0 C11.6 0 16.3 7 20.3 13.9 C20.7 14.6 21 15.4 21.1 16.2 C21.7 15 22 11.8 21.6 9.8 Z"/></svg>
<a class="t" style="left:1149.76px;top:1033.09px;font-size:26.88px;line-height:35px;letter-spacing:-0.121px;font-weight:normal;color:#3a80be;">djcat.eth</a>
<svg style="left:1263.4px;top:1036.3px" width="23.3" height="25.6" viewBox="0 0 23.3 25.6"><path class="s" stroke="#adb5bd" stroke-width="2.35" d="M10.75 17.85 H19.15 a3 3 0 0 0 3 -3 V6.2 L17.6 1.15 H10.75 a3 3 0 0 0 -3 3 V14.85 a3 3 0 0 0 3 3z"/><path class="s" stroke="#adb5bd" stroke-width="2.35" d="M5 8.1 H4.15 a3 3 0 0 0 -3 3 V21.5 a3 3 0 0 0 3 3 H12.15 a3 3 0 0 0 3 -3 V21.2"/></svg>
<div class="abs" style="left:1500.1px;top:1029.9px;width:47.9px;height:42.1px;background:#ebf5f3;border:1.5px solid #bce0d6;border-radius:11px"></div>
<span class="t" style="left:1515.20px;top:1038.83px;font-size:18.95px;line-height:25px;letter-spacing:0.135px;font-weight:bold;color:#389a7e;-webkit-text-stroke:0;">IN</span>
<span class="t" style="left:1578.46px;top:1033.09px;font-size:26.88px;line-height:35px;letter-spacing:-0.495px;font-weight:normal;color:#212529;">0x1a19c370...e89B36813</span>
<svg style="left:1894.6px;top:1036.3px" width="23.3" height="25.6" viewBox="0 0 23.3 25.6"><path class="s" stroke="#adb5bd" stroke-width="2.35" d="M10.75 17.85 H19.15 a3 3 0 0 0 3 -3 V6.2 L17.6 1.15 H10.75 a3 3 0 0 0 -3 3 V14.85 a3 3 0 0 0 3 3z"/><path class="s" stroke="#adb5bd" stroke-width="2.35" d="M5 8.1 H4.15 a3 3 0 0 0 -3 3 V21.5 a3 3 0 0 0 3 3 H12.15 a3 3 0 0 0 3 -3 V21.2"/></svg>
<span class="t" style="left:2050.86px;top:1033.09px;font-size:26.88px;line-height:35px;letter-spacing:-0.702px;font-weight:normal;color:#212529;">0.0001 ETH</span>
<span class="t" style="left:2314.70px;top:1033.91px;font-size:24.21px;line-height:31px;letter-spacing:-0.624px;font-weight:normal;color:#6c757d;">0.00012708</span>
<div class="line" style="top:1092.25px"></div>
<div class="btnw" style="left:74.4px;top:1111.3px;width:49.2px;height:49.9px;"></div>
<svg style="left:89.3px;top:1127.7px" width="19.9" height="15.6" viewBox="0 0 19.9 15.6"><path class="s" stroke="#212529" stroke-width="2" d="M1.1 7.8 C3.2 3.4 6.3 1.1 9.95 1.1 C13.6 1.1 16.7 3.4 18.8 7.8 C16.7 12.2 13.6 14.5 9.95 14.5 C6.3 14.5 3.2 12.2 1.1 7.8 Z"/><circle class="s" stroke="#212529" stroke-width="2" cx="9.95" cy="7.8" r="3.6"/><circle cx="8.9" cy="6.8" r="1.3" fill="#212529"/></svg>
<a class="t" style="left:153.56px;top:1118.99px;font-size:26.88px;line-height:35px;letter-spacing:-0.444px;font-weight:normal;color:#3a80be;">0xcae7bad03b<i style="font-style:normal;letter-spacing:-1.7px">...</i></a>
<svg style="left:366.8px;top:1122.2px" width="23.3" height="25.6" viewBox="0 0 23.3 25.6"><path class="s" stroke="#adb5bd" stroke-width="2.35" d="M10.75 17.85 H19.15 a3 3 0 0 0 3 -3 V6.2 L17.6 1.15 H10.75 a3 3 0 0 0 -3 3 V14.85 a3 3 0 0 0 3 3z"/><path class="s" stroke="#adb5bd" stroke-width="2.35" d="M5 8.1 H4.15 a3 3 0 0 0 -3 3 V21.5 a3 3 0 0 0 3 3 H12.15 a3 3 0 0 0 3 -3 V21.2"/></svg>
<div class="abs" style="left:537.1px;top:1114.9px;width:148.8px;height:42.6px;background:#f8f9fb;border:1.5px solid #dfe2e6;border-radius:11px"></div>
<span class="t" style="left:571.40px;top:1123.16px;font-size:20.60px;line-height:27px;letter-spacing:-0.342px;font-weight:normal;color:#000;-webkit-text-stroke:0.5px #000;">Transfer*</span>
<a class="t" style="left:715.24px;top:1118.99px;font-size:26.88px;line-height:35px;letter-spacing:-0.351px;font-weight:normal;color:#3a80be;">21865865</a>
<span class="t" style="left:901.56px;top:1118.99px;font-size:26.88px;line-height:35px;letter-spacing:-0.441px;font-weight:normal;color:#212529;">3 mins ago</span>
<svg style="left:1119.2px;top:1122.7px" width="21.8" height="23.4" viewBox="0 0 21.8 23.4"><path fill="#8a8a8a" d="M2.9 6.3 C3.4 5.3 4.2 4.7 4.2 4.7 L10.3 0 L4.3 10.4 C4.3 10.4 3.7 9.5 3.4 9 C3.1 8.4 2.6 7.2 2.9 6.3 Z M0.2 13.6 C0.5 15.4 1.4 17 2.7 18.1 L10.2 23.4 C10.2 23.4 5.5 16.4 1.5 9.5 C1.1 8.8 0.8 8 0.7 7.2 C0.1 8.4 -0.2 11.6 0.2 13.6 Z M18.9 17.1 C18.4 18.1 17.6 18.7 17.6 18.7 L11.5 23.4 L17.5 13 C17.5 13 18.1 13.9 18.4 14.4 C18.7 15 19.2 16.2 18.9 17.1 Z M21.6 9.8 C21.3 8 20.4 6.4 19.1 5.3 L11.6 0 C11.6 0 16.3 7 20.3 13.9 C20.7 14.6 21 15.4 21.1 16.2 C21.7 15 22 11.8 21.6 9.8 Z"/></svg>
<a class="t" style="left:1149.26px;top:1118.99px;font-size:26.88px;line-height:35px;letter-spacing:-0.385px;font-weight:normal;color:#3a80be;">arvnd.eth</a>
<svg style="left:1270.5px;top:1122.2px" width="23.3" height="25.6" viewBox="0 0 23.3 25.6"><path class="s" stroke="#adb5bd" stroke-width="2.35" d="M10.75 17.85 H19.15 a3 3 0 0 0 3 -3 V6.2 L17.6 1.15 H10.75 a3 3 0 0 0 -3 3 V14.85 a3 3 0 0 0 3 3z"/><path class="s" stroke="#adb5bd" stroke-width="2.35" d="M5 8.1 H4.15 a3 3 0 0 0 -3 3 V21.5 a3 3 0 0 0 3 3 H12.15 a3 3 0 0 0 3 -3 V21.2"/></svg>
<div class="abs" style="left:1500.1px;top:1115.8px;width:47.9px;height:42.1px;background:#ebf5f3;border:1.5px solid #bce0d6;border-radius:11px"></div>
<span class="t" style="left:1515.20px;top:1124.73px;font-size:18.95px;line-height:25px;letter-spacing:0.135px;font-weight:bold;color:#389a7e;-webkit-text-stroke:0;">IN</span>
<span class="t" style="left:1578.46px;top:1118.99px;font-size:26.88px;line-height:35px;letter-spacing:-0.495px;font-weight:normal;color:#212529;">0x1a19c370...e89B36813</span>
<svg style="left:1894.6px;top:1122.2px" width="23.3" height="25.6" viewBox="0 0 23.3 25.6"><path class="s" stroke="#adb5bd" stroke-width="2.35" d="M10.75 17.85 H19.15 a3 3 0 0 0 3 -3 V6.2 L17.6 1.15 H10.75 a3 3 0 0 0 -3 3 V14.85 a3 3 0 0 0 3 3z"/><path class="s" stroke="#adb5bd" stroke-width="2.35" d="M5 8.1 H4.15 a3 3 0 0 0 -3 3 V21.5 a3 3 0 0 0 3 3 H12.15 a3 3 0 0 0 3 -3 V21.2"/></svg>
<span class="t" style="left:2050.86px;top:1118.99px;font-size:26.88px;line-height:35px;letter-spacing:-1.163px;font-weight:normal;color:#212529;">0 ETH</span>
<span class="t" style="left:2314.70px;top:1119.81px;font-size:24.21px;line-height:31px;letter-spacing:-0.613px;font-weight:normal;color:#6c757d;">0.00010056</span>
<div class="line" style="top:1178.15px"></div>
<div class="btnw" style="left:74.4px;top:1197.2px;width:49.2px;height:49.9px;"></div>
<svg style="left:89.3px;top:1213.6px" width="19.9" height="15.6" viewBox="0 0 19.9 15.6"><path class="s" stroke="#212529" stroke-width="2" d="M1.1 7.8 C3.2 3.4 6.3 1.1 9.95 1.1 C13.6 1.1 16.7 3.4 18.8 7.8 C16.7 12.2 13.6 14.5 9.95 14.5 C6.3 14.5 3.2 12.2 1.1 7.8 Z"/><circle class="s" stroke="#212529" stroke-width="2" cx="9.95" cy="7.8" r="3.6"/><circle cx="8.9" cy="6.8" r="1.3" fill="#212529"/></svg>
<a class="t" style="left:153.56px;top:1204.89px;font-size:26.88px;line-height:35px;letter-spacing:-0.294px;font-weight:normal;color:#3a80be;">0xc85b801770<i style="font-style:normal;letter-spacing:-1.7px">...</i></a>
<svg style="left:366.8px;top:1208.1px" width="23.3" height="25.6" viewBox="0 0 23.3 25.6"><path class="s" stroke="#adb5bd" stroke-width="2.35" d="M10.75 17.85 H19.15 a3 3 0 0 0 3 -3 V6.2 L17.6 1.15 H10.75 a3 3 0 0 0 -3 3 V14.85 a3 3 0 0 0 3 3z"/><path class="s" stroke="#adb5bd" stroke-width="2.35" d="M5 8.1 H4.15 a3 3 0 0 0 -3 3 V21.5 a3 3 0 0 0 3 3 H12.15 a3 3 0 0 0 3 -3 V21.2"/></svg>
<div class="abs" style="left:537.1px;top:1200.8px;width:148.8px;height:42.6px;background:#f8f9fb;border:1.5px solid #dfe2e6;border-radius:11px"></div>
<span class="t" style="left:571.40px;top:1209.06px;font-size:20.60px;line-height:27px;letter-spacing:-0.342px;font-weight:normal;color:#000;-webkit-text-stroke:0.5px #000;">Transfer*</span>
<a class="t" style="left:715.24px;top:1204.89px;font-size:26.88px;line-height:35px;letter-spacing:-0.411px;font-weight:normal;color:#3a80be;">21865860</a>
<span class="t" style="left:901.98px;top:1204.89px;font-size:26.88px;line-height:35px;letter-spacing:-0.487px;font-weight:normal;color:#212529;">4 mins ago</span>
<a class="t" style="left:1118.41px;top:1204.89px;font-size:26.88px;line-height:35px;letter-spacing:-0.532px;font-weight:normal;color:#3a80be;">0x4BDe58B4...5f4F4A11b</a>
<svg style="left:1437.0px;top:1208.1px" width="23.3" height="25.6" viewBox="0 0 23.3 25.6"><path class="s" stroke="#adb5bd" stroke-width="2.35" d="M10.75 17.85 H19.15 a3 3 0 0 0 3 -3 V6.2 L17.6 1.15 H10.75 a3 3 0 0 0 -3 3 V14.85 a3 3 0 0 0 3 3z"/><path class="s" stroke="#adb5bd" stroke-width="2.35" d="M5 8.1 H4.15 a3 3 0 0 0 -3 3 V21.5 a3 3 0 0 0 3 3 H12.15 a3 3 0 0 0 3 -3 V21.2"/></svg>
<div class="abs" style="left:1500.1px;top:1201.7px;width:47.9px;height:42.1px;background:#ebf5f3;border:1.5px solid #bce0d6;border-radius:11px"></div>
<span class="t" style="left:1515.20px;top:1210.63px;font-size:18.95px;line-height:25px;letter-spacing:0.135px;font-weight:bold;color:#389a7e;-webkit-text-stroke:0;">IN</span>
<span class="t" style="left:1578.46px;top:1204.89px;font-size:26.88px;line-height:35px;letter-spacing:-0.495px;font-weight:normal;color:#212529;">0x1a19c370...e89B36813</span>
<svg style="left:1894.6px;top:1208.1px" width="23.3" height="25.6" viewBox="0 0 23.3 25.6"><path class="s" stroke="#adb5bd" stroke-width="2.35" d="M10.75 17.85 H19.15 a3 3 0 0 0 3 -3 V6.2 L17.6 1.15 H10.75 a3 3 0 0 0 -3 3 V14.85 a3 3 0 0 0 3 3z"/><path class="s" stroke="#adb5bd" stroke-width="2.35" d="M5 8.1 H4.15 a3 3 0 0 0 -3 3 V21.5 a3 3 0 0 0 3 3 H12.15 a3 3 0 0 0 3 -3 V21.2"/></svg>
<span class="t" style="left:2050.86px;top:1204.89px;font-size:26.88px;line-height:35px;letter-spacing:-1.163px;font-weight:normal;color:#212529;">0 ETH</span>
<span class="t" style="left:2314.70px;top:1205.71px;font-size:24.21px;line-height:31px;letter-spacing:-0.657px;font-weight:normal;color:#6c757d;">0.00014394</span>
</section>
</main>
<div class="abs" style="left:880px;top:1280px;width:1000px;height:40px;border-radius:20px;box-shadow:0 0 60px 22px rgba(0,0,0,0.2);pointer-events:none"></div>
</body>
</html>
